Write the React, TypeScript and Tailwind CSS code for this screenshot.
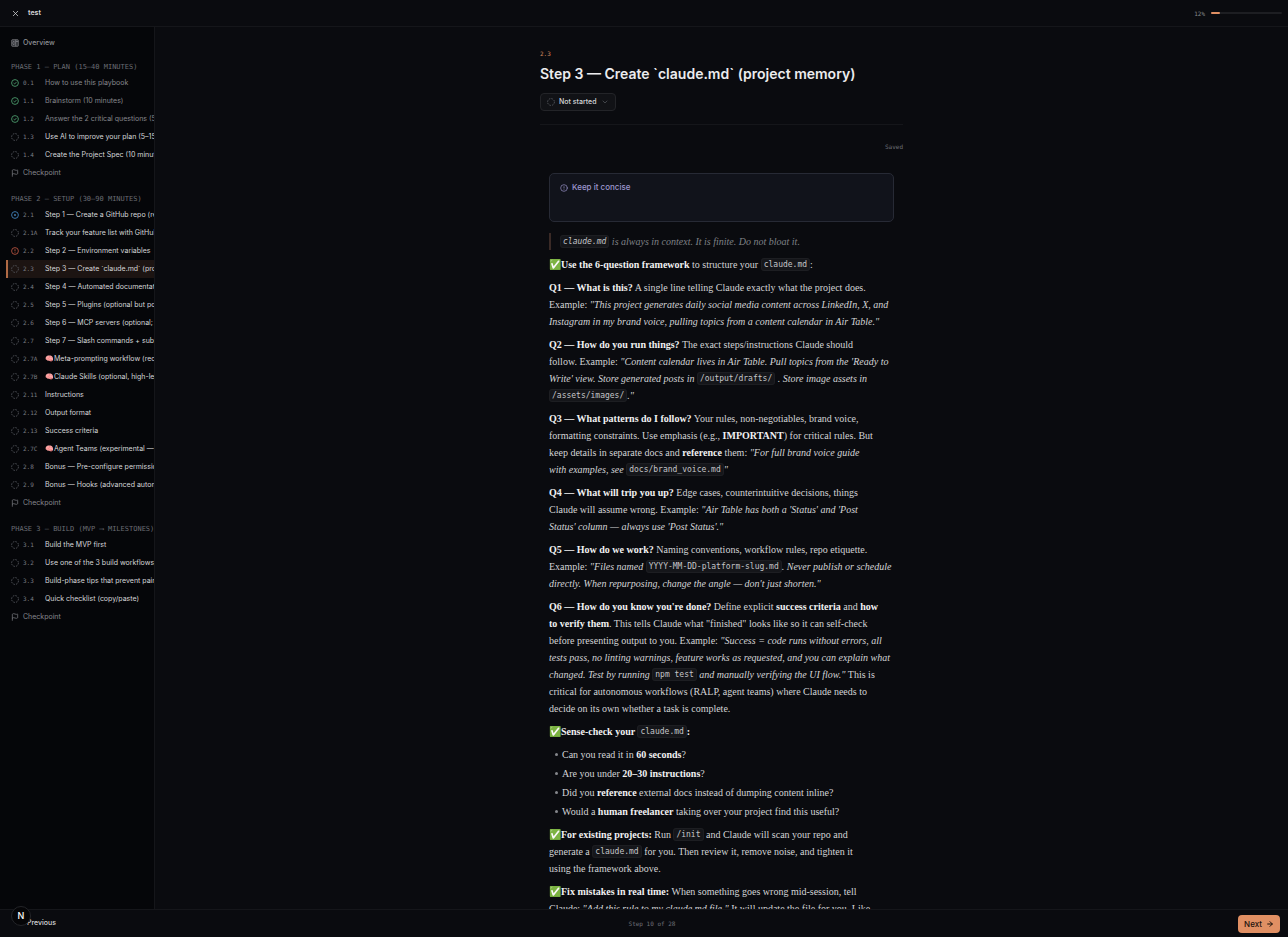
import type { ReactNode } from "react";
import { ArrowRight, ChevronDown, CircleAlert, Flag, X } from "lucide-react";

type Status = "done" | "todo" | "active" | "blocked";
type Step = { id: string; title: string; status: Status };
type Phase = { name: string; steps: Step[] };

const step = (id: string, title: string, status: Status = "todo"): Step => ({ id, title, status });

const phases: Phase[] = [
  {
    name: "PHASE 1 — PLAN (15–40 MINUTES)",
    steps: [
      step("0.1", "How to use this playbook", "done"),
      step("1.1", "Brainstorm (10 minutes)", "done"),
      step("1.2", "Answer the 2 critical questions (5 minutes)", "done"),
      step("1.3", "Use AI to improve your plan (5–15 minutes)"),
      step("1.4", "Create the Project Spec (10 minutes)"),
    ],
  },
  {
    name: "PHASE 2 — SETUP (30–90 MINUTES)",
    steps: [
      step("2.1", "Step 1 — Create a GitHub repo (recommended)", "active"),
      step("2.1A", "Track your feature list with GitHub Issues"),
      step("2.2", "Step 2 — Environment variables", "blocked"),
      step("2.3", "Step 3 — Create `claude.md` (project memory)"),
      step("2.4", "Step 4 — Automated documentation"),
      step("2.5", "Step 5 — Plugins (optional but powerful)"),
      step("2.6", "Step 6 — MCP servers (optional; powerful)"),
      step("2.7", "Step 7 — Slash commands + subagents"),
      step("2.7A", "🧠Meta-prompting workflow (recommended)"),
      step("2.7B", "🧠Claude Skills (optional, high-leverage)"),
      step("2.11", "Instructions"),
      step("2.12", "Output format"),
      step("2.13", "Success criteria"),
      step("2.7C", "🧠Agent Teams (experimental — advanced)"),
      step("2.8", "Bonus — Pre-configure permissions"),
      step("2.9", "Bonus — Hooks (advanced automation)"),
    ],
  },
  {
    name: "PHASE 3 — BUILD (MVP ⟶ MILESTONES)",
    steps: [
      step("3.1", "Build the MVP first"),
      step("3.2", "Use one of the 3 build workflows"),
      step("3.3", "Build-phase tips that prevent pain"),
      step("3.4", "Quick checklist (copy/paste)"),
    ],
  },
];

const currentId = "2.3";

function StatusIcon({ status }: { status: Status }) {
  const common = { viewBox: "0 0 16 16", fill: "none", strokeWidth: 1.8, "aria-hidden": true } as const;
  if (status === "done")
    return (
      <svg {...common} className="size-2 shrink-0 stroke-[#4c9a6c]">
        <circle cx="8" cy="8" r="6.8" />
        <path d="M5.2 8.2 7.2 10l3.6-3.8" />
      </svg>
    );
  if (status === "active")
    return (
      <svg {...common} className="size-2 shrink-0 stroke-[#4180b8]">
        <circle cx="8" cy="8" r="6.8" />
        <circle cx="8" cy="8" r="1.2" className="fill-[#4180b8]" />
      </svg>
    );
  if (status === "blocked")
    return (
      <svg {...common} className="size-2 shrink-0 stroke-[#b4523f]">
        <circle cx="8" cy="8" r="6.8" />
        <path d="M8 4.5v4.2M8 10.4v1.4" />
      </svg>
    );
  return (
    <svg {...common} className="size-2 shrink-0 stroke-[#5b5d64]">
      <circle cx="8" cy="8" r="6.8" strokeDasharray="3 2.34" />
    </svg>
  );
}

function OverviewIcon() {
  return (
    <svg viewBox="0 0 16 16" fill="none" strokeWidth="1.5" className="size-2 shrink-0 stroke-[#85878c]" aria-hidden>
      <rect x="1.5" y="1.5" width="13" height="13" rx="1" className="fill-[#2c2e33]" />
      <path d="M9.5 1.5v13M1.5 8h8M9.5 5h5M4 5h3M4 11h3" />
    </svg>
  );
}

function Code({ children }: { children: ReactNode }) {
  return (
    <code className="rounded-[3px] border border-[#1d1e22] bg-[#15161a] px-0.5 py-px align-[1px] font-['DejaVu_Sans_Mono',monospace] text-[8px] leading-none font-normal text-[#c4c5c8]">
      {children}
    </code>
  );
}

function B({ children }: { children: ReactNode }) {
  return <strong className="font-bold text-[#f1f1f2]">{children}</strong>;
}

function Bullet({ children }: { children: ReactNode }) {
  return (
    <li className="flex items-center gap-1 pl-[6px]">
      <span className="size-[3px] shrink-0 rounded-full bg-[#85878c]" aria-hidden />
      <span>{children}</span>
    </li>
  );
}

function StepRow({ item }: { item: Step }) {
  const current = item.id === currentId;
  return (
    <a
      href={`#${item.id}`}
      aria-current={current ? "step" : undefined}
      className={`ml-1.5 flex h-[18px] items-center border-l-2 pl-[3px] ${
        current ? "border-[#b06a45] bg-[#1c1412]" : "border-transparent"
      }`}
    >
      <StatusIcon status={item.status} />
      <span className="ml-1 w-[22px] shrink-0 font-['DejaVu_Sans_Mono',monospace] text-[6px] leading-[8px] text-[#7a7c83]">{item.id}</span>
      <span className={`whitespace-nowrap ${item.status === "done" ? "text-[#85878c]" : "text-[#d6d7d9]"}`}>
        {item.title}
      </span>
    </a>
  );
}

function Sidebar() {
  return (
    <nav aria-label="Playbook" className="w-[155px] shrink-0 overflow-hidden border-r border-[#15161a] bg-[#050609] pt-[7px] text-[7px]">
      <a href="#overview" className="flex h-[18px] items-center gap-1 pl-[11px] font-medium text-[#909297]">
        <OverviewIcon />
        Overview
      </a>
      <div className="mt-2.5 flex flex-col gap-3">
        {phases.map((phase) => (
          <section key={phase.name}>
            <h2 className="flex h-[10px] items-center whitespace-nowrap pl-[11px] font-['DejaVu_Sans_Mono',monospace] text-[7px] text-[#6a6c73]">
              {phase.name}
            </h2>
            <div className="mt-0.5">
              {phase.steps.map((item) => (
                <StepRow key={item.id} item={item} />
              ))}
              <a href="#checkpoint" className="flex h-[18px] items-center gap-1 pl-[11px] text-[#85878c]">
                <Flag className="size-2" aria-hidden />
                Checkpoint
              </a>
            </div>
          </section>
        ))}
      </div>
    </nav>
  );
}

function Article() {
  return (
    <div className="flex flex-col gap-1.5 px-[9px] font-['Liberation_Serif',serif] text-[10px] leading-[17px] text-[#d3d4d6]">
      <aside className="mb-[5px] h-[49px] rounded-[5px] border border-[#272a35] bg-[#11131b] px-2.5 py-[5px] font-['Inter',sans-serif] text-[8px] font-medium text-[#9d97cf]">
        <p className="flex items-center gap-1">
          <CircleAlert className="size-2" aria-hidden />
          Keep it concise
        </p>
      </aside>
      <blockquote className="border-l-2 border-[#3a2a26] pl-[9px] italic text-[#7f8186]">
        <Code>claude.md</Code> is always in context. It is finite. Do not bloat it.
      </blockquote>
      <p>
        ✅<B>Use the 6-question framework</B> to structure your <Code>claude.md</Code>:
      </p>
      <p>
        <B>Q1 — What is this?</B> A single line telling Claude exactly what the project does.<br />
        Example: <em>"This project generates daily social media content across LinkedIn, X, and<br />
        Instagram in my brand voice, pulling topics from a content calendar in Air Table."</em>
      </p>
      <p>
        <B>Q2 — How do you run things?</B> The exact steps/instructions Claude should<br />
        follow. Example: <em>"Content calendar lives in Air Table. Pull topics from the 'Ready to<br />
        Write' view. Store generated posts in</em> <Code>/output/drafts/</Code> <em>. Store image assets in</em><br />
        <Code>/assets/images/</Code><em>."</em>
      </p>
      <p>
        <B>Q3 — What patterns do I follow?</B> Your rules, non-negotiables, brand voice,<br />
        formatting constraints. Use emphasis (e.g., <B>IMPORTANT</B>) for critical rules. But<br />
        keep details in separate docs and <B>reference</B> them: <em>"For full brand voice guide<br />
        with examples, see</em> <Code>docs/brand_voice.md</Code><em>"</em>
      </p>
      <p>
        <B>Q4 — What will trip you up?</B> Edge cases, counterintuitive decisions, things<br />
        Claude will assume wrong. Example: <em>"Air Table has both a 'Status' and 'Post<br />
        Status' column — always use 'Post Status'."</em>
      </p>
      <p>
        <B>Q5 — How do we work?</B> Naming conventions, workflow rules, repo etiquette.<br />
        Example: <em>"Files named</em> <Code>YYYY-MM-DD-platform-slug.md</Code><em>. Never publish or schedule<br />
        directly. When repurposing, change the angle — don't just shorten."</em>
      </p>
      <p>
        <B>Q6 — How do you know you're done?</B> Define explicit <B>success criteria</B> and <B>how<br />
        to verify them</B>. This tells Claude what "finished" looks like so it can self-check<br />
        before presenting output to you. Example: <em>"Success = code runs without errors, all<br />
        tests pass, no linting warnings, feature works as requested, and you can explain what<br />
        changed. Test by running</em> <Code>npm test</Code> <em>and manually verifying the UI flow."</em> This is<br />
        critical for autonomous workflows (RALP, agent teams) where Claude needs to<br />
        decide on its own whether a task is complete.
      </p>
      <p>
        ✅<B>Sense-check your <Code>claude.md</Code>:</B>
      </p>
      <ul className="flex flex-col gap-0.5">
        <Bullet>Can you read it in <B>60 seconds</B>?</Bullet>
        <Bullet>Are you under <B>20–30 instructions</B>?</Bullet>
        <Bullet>Did you <B>reference</B> external docs instead of dumping content inline?</Bullet>
        <Bullet>Would a <B>human freelancer</B> taking over your project find this useful?</Bullet>
      </ul>
      <p>
        ✅<B>For existing projects:</B> Run <Code>/init</Code> and Claude will scan your repo and<br />
        generate a <Code>claude.md</Code> for you. Then review it, remove noise, and tighten it<br />
        using the framework above.
      </p>
      <p>
        ✅<B>Fix mistakes in real time:</B> When something goes wrong mid-session, tell<br />
        Claude: <em>"Add this rule to my claude.md file."</em> It will update the file for you. Like
      </p>
    </div>
  );
}

export default function App() {
  return (
    <div className="flex h-screen flex-col overflow-hidden bg-[#0a0b0f] font-['Inter',sans-serif] text-[#d6d7d9]">
      <header className="flex h-[27px] shrink-0 items-center border-b border-[#15161a] pl-[11px] pr-1.5">
        <button type="button" aria-label="Close">
          <X className="size-[9px]" aria-hidden />
        </button>
        <h1 className="ml-2 text-[7px] font-semibold">test</h1>
        <span className="ml-auto font-['DejaVu_Sans_Mono',monospace] text-[6px] text-[#85878c]">12%</span>
        <div role="progressbar" aria-label="Progress" aria-valuenow={12} className="ml-1.5 h-0.5 w-[71px] rounded-full bg-[#1d1e22]">
          <div className="h-full w-[12%] rounded-full bg-[#e08f63]" />
        </div>
      </header>
      <div className="flex min-h-0 flex-1">
        <Sidebar />
        <main className="min-w-0 flex-1 overflow-hidden">
          <div className="mx-auto max-w-[363px] pt-[22px]">
            <p className="font-['DejaVu_Sans_Mono',monospace] text-[6px] leading-[10px] text-[#d98a5f]">2.3</p>
            <h2 className="mt-1 whitespace-nowrap text-[14px] font-semibold leading-[22px] text-[#ececee]">
              Step 3 — Create `claude.md` (project memory)
            </h2>
            <button type="button" className="mt-2 flex h-[18px] items-center gap-1 rounded-sm border border-[#232428] bg-[#111216] px-1.5 text-[7px] font-medium">
              <StatusIcon status="todo" />
              Not started
              <ChevronDown className="size-2 text-[#5b5d64]" aria-hidden />
            </button>
            <hr className="mt-[13px] border-[#15161a]" />
            <p className="mb-[21px] mt-[17px] text-right font-['DejaVu_Sans_Mono',monospace] text-[6px] leading-[10px] text-[#6e7077]">Saved</p>
            <Article />
          </div>
        </main>
      </div>
      <footer className="relative grid h-7 shrink-0 grid-cols-3 items-center border-t border-[#15161a] px-2">
        <button type="button" className="justify-self-start pl-[19px] text-[7px] font-medium">Previous</button>
        <span className="ml-4 justify-self-center font-['DejaVu_Sans_Mono',monospace] text-[6px] text-[#6e7077]">Step 10 of 28</span>
        <button type="button" className="flex h-[18px] items-center gap-1 justify-self-end rounded-sm bg-[#e08f63] px-1.5 text-[8px] font-medium text-[#1b120d]">
          Next
          <ArrowRight className="size-2" strokeWidth={3} aria-hidden />
        </button>
        <button type="button" aria-label="Developer tools" className="absolute -top-1 left-[11px] flex size-5 items-center justify-center rounded-full border border-[#232428] bg-[#050507] text-[9px] font-medium text-white">
          N
        </button>
      </footer>
    </div>
  );
}
